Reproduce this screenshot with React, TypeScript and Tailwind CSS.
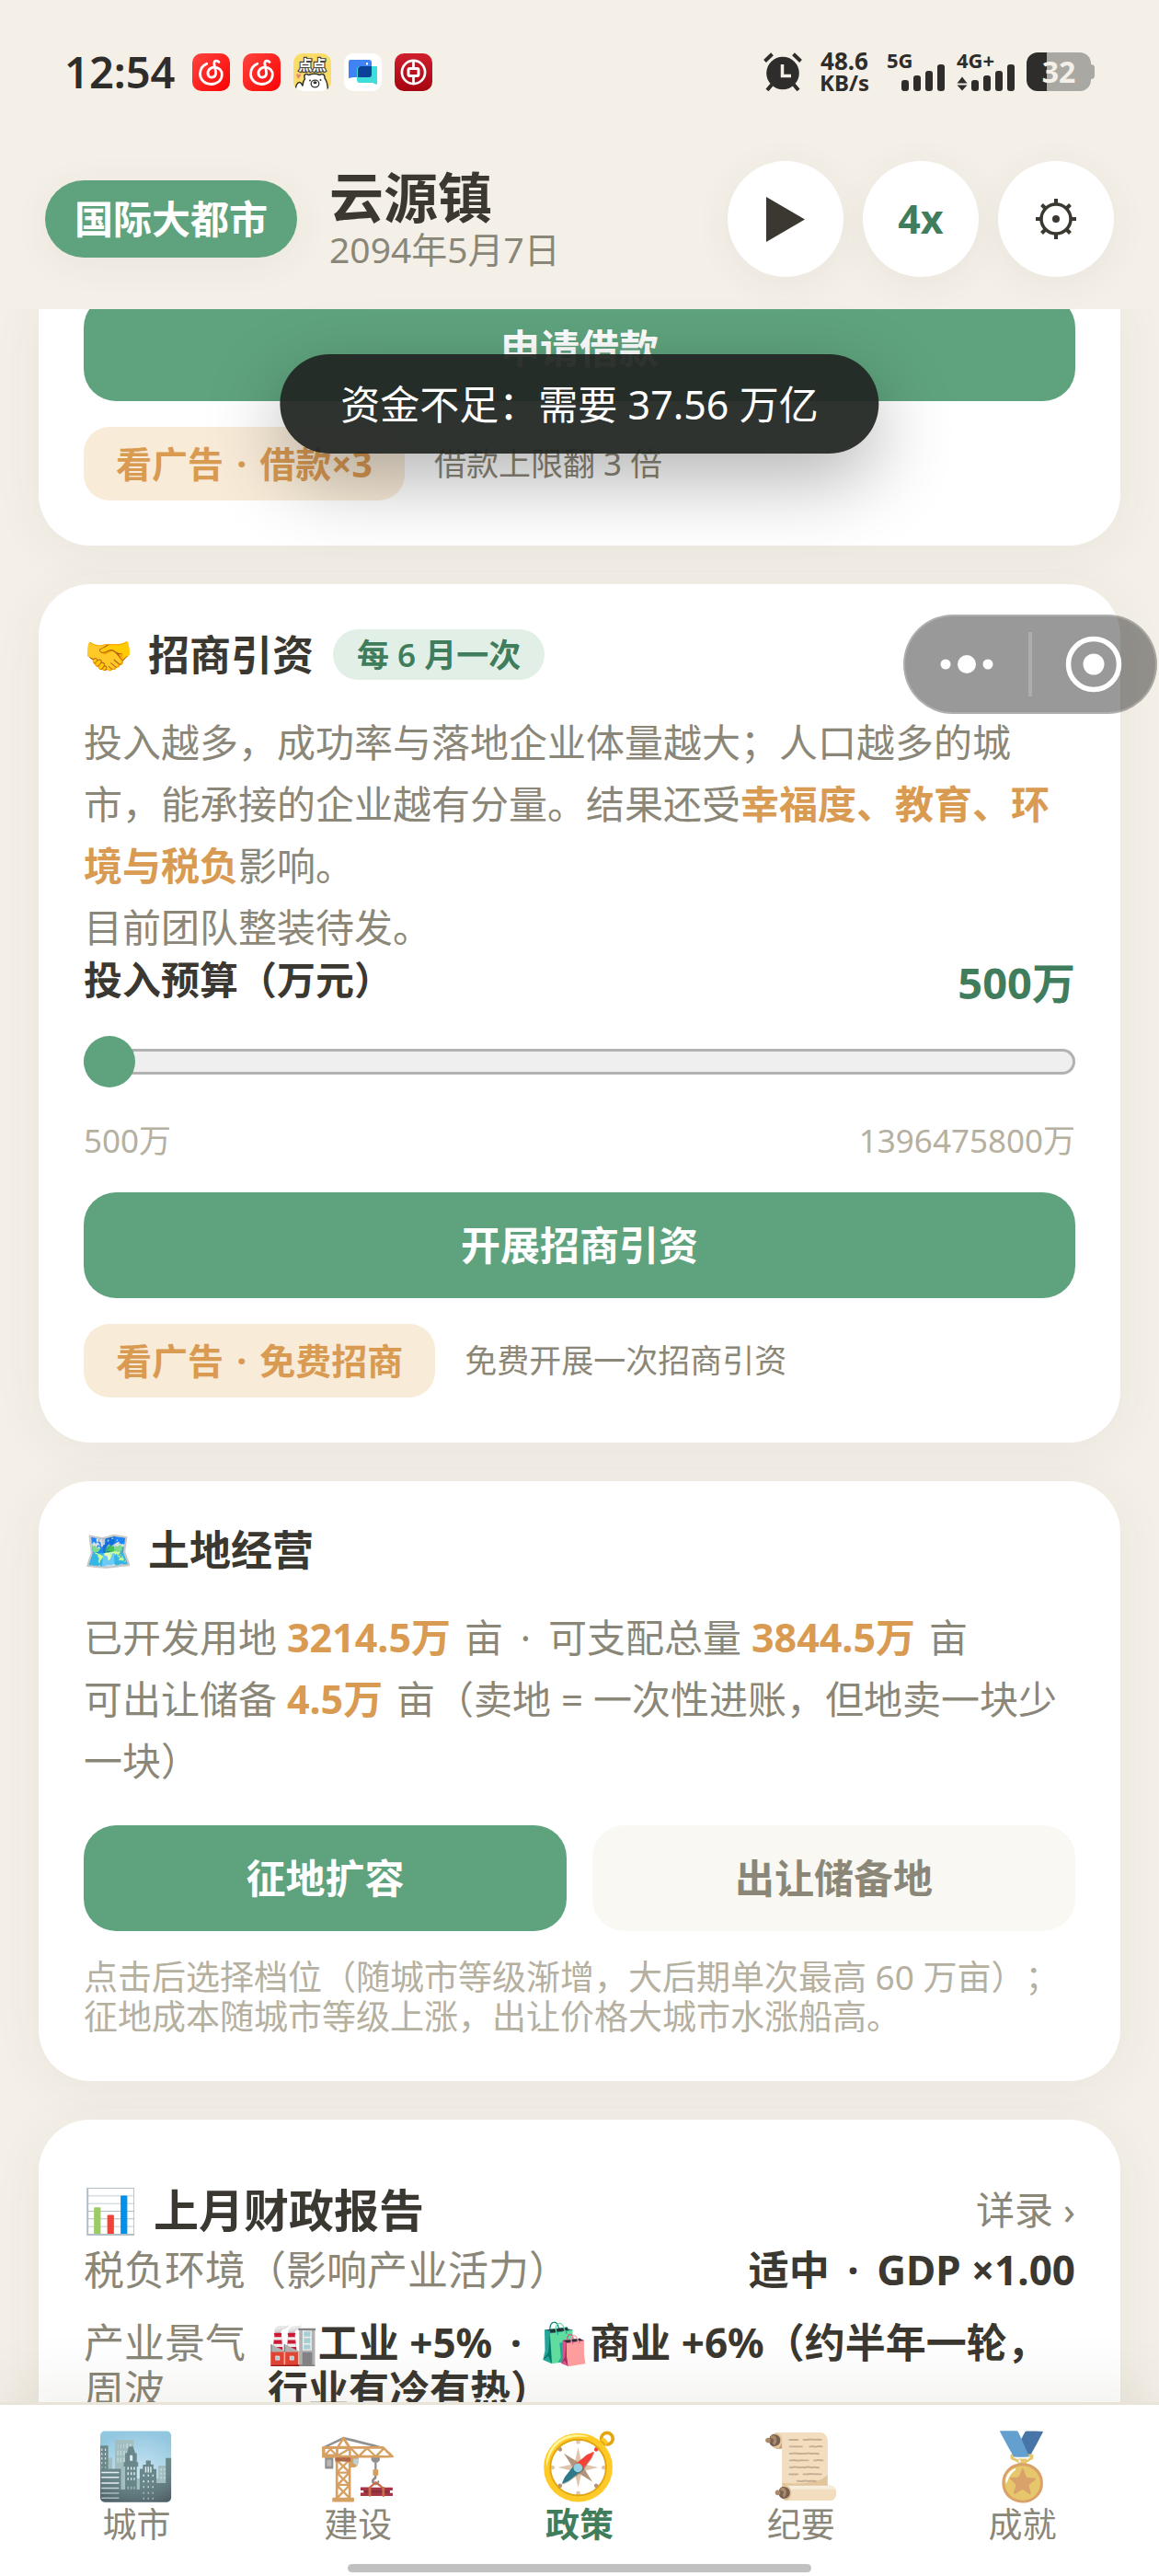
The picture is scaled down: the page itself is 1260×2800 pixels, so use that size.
import { useState } from 'react';
import type { ReactNode } from 'react';
import clsx from 'clsx';

const TABS = [
    { id: 'city', icon: '🏙️', label: '城市' },
    { id: 'build', icon: '🏗️', label: '建设' },
    { id: 'policy', icon: '🧭', label: '政策' },
    { id: 'notes', icon: '📜', label: '纪要' },
    { id: 'medals', icon: '🏅', label: '成就' },
];

function MusicIcon() {
    return (
        <svg viewBox="0 0 41 41" className="size-[41px]" aria-hidden="true">
            <defs>
                <linearGradient id="music" x1="0" y1="0" x2="1" y2="1">
                    <stop offset="0" stopColor="#ff4540" />
                    <stop offset="1" stopColor="#fb0202" />
                </linearGradient>
            </defs>
            <rect width="41" height="41" rx="10" fill="url(#music)" />
            <g fill="none" stroke="#fff" strokeWidth="2.8" strokeLinecap="round">
                <path d="M29 9.500C27.500 7.500 24 7.500 23.800 10.500C23.800 13 26 19 25.500 22.500C25 26 20 27.500 17.800 24.500C15.500 20.500 18 16 23 15.200C29.500 14.800 32.500 19 32.300 23.500C32 29.500 27 33.500 20.500 33.500C13 33.500 8.500 28 8.500 22.500C8.500 17 11.500 13 15.800 11.200" />
            </g>
        </svg>
    );
}

function BearIcon() {
    return (
        <svg viewBox="0 0 41 41" className="size-[41px]" aria-hidden="true">
            <defs>
                <clipPath id="bear"><rect width="41" height="41" rx="10" /></clipPath>
            </defs>
            <g clipPath="url(#bear)">
                <rect width="41" height="41" fill="#f9dd68" />
                <text x="20.500" y="18" textAnchor="middle" fontSize="15" fontWeight="700" fill="#fff" stroke="#444" strokeWidth="2.400" paintOrder="stroke" fontFamily="Noto Sans CJK SC, sans-serif">点点</text>
                <path d="M3 23c1-1.500 2.500-.5 2.500.5c.5-1.500 3-1 2.500.8L5 28z" fill="#ef7f7c" />
                <path d="M2 42c0-6 2-11 5-10.500c2 .5 2.500 3 3 4c0-4 1-6 2.500-8c-2-4 1-6.500 4-4c4-1.500 9-1.500 12 0c3-2 6-.5 5.500 3.500c2.500 3 3.500 10 3.500 15z" fill="#fff" stroke="#333" strokeWidth="1.500" />
                <ellipse cx="23.500" cy="33" rx="4.300" ry="3.800" fill="#fff" stroke="#333" strokeWidth="1.300" />
                <ellipse cx="23.500" cy="31.800" rx="2" ry="1.500" fill="#333" />
                <circle cx="18" cy="29.500" r="1" fill="#333" />
                <circle cx="29.500" cy="29" r="1" fill="#333" />
            </g>
        </svg>
    );
}

function ChatIcon() {
    return (
        <svg viewBox="0 0 41 41" className="size-[41px]" aria-hidden="true">
            <rect width="41" height="41" rx="10" fill="#fff" />
            <path d="M7 7h20a3 3 0 0 1 3 3v16H10l-5 1V9a2 2 0 0 1 2-2z" fill="#3f83f6" />
            <path d="M18 14h18v20l-5-2H17a3 3 0 0 1-3-3V18a4 4 0 0 1 4-4z" fill="#3fdcdc" />
            <path d="M18 14h12v9a3 3 0 0 1-3 3H15v-8a4 4 0 0 1 3-4z" fill="#0b4298" />
            <rect x="24" y="10" width="2" height="2.500" fill="#fff" />
        </svg>
    );
}

function BankIcon() {
    return (
        <svg viewBox="0 0 41 41" className="size-[41px]" aria-hidden="true">
            <defs>
                <linearGradient id="bank" x1="0" y1="0" x2="0" y2="1">
                    <stop offset="0" stopColor="#cf1e2e" />
                    <stop offset="1" stopColor="#a5060f" />
                </linearGradient>
            </defs>
            <rect width="41" height="41" rx="10" fill="url(#bank)" />
            <g fill="none" stroke="#fff">
                <circle cx="20.500" cy="20.500" r="12.600" strokeWidth="2.700" />
                <rect x="15" y="16.500" width="11" height="8" rx="1.500" strokeWidth="3" />
                <path d="M20.500 8v8M20.500 25v8" strokeWidth="2.700" />
            </g>
        </svg>
    );
}

function AlarmIcon() {
    return (
        <svg viewBox="0 0 42 42" className="size-[42px]" aria-hidden="true">
            <circle cx="21" cy="22.500" r="17.800" fill="#2f2d2b" />
            <g fill="none" stroke="#2f2d2b" strokeWidth="4" strokeLinecap="butt">
                <path d="M1.500 9.500L9.500 1.800M40.500 9.500L32.500 1.800M9 35l-5 6M33 35l5 6" />
            </g>
            <path d="M20.500 13v12.500h9.500" fill="none" stroke="#f4f0e8" strokeWidth="3.500" />
        </svg>
    );
}

function Signal({ label, arrows }: { label: string; arrows?: boolean }) {
    return (
        <span className="relative block h-[42px] w-16">
            <span className="absolute -top-1 left-0 text-[22px] leading-6 font-bold">{label}</span>
            <svg viewBox="0 0 64 42" className="block h-[42px] w-16" fill="#2f2d2b" aria-hidden="true">
                {arrows && <path d="M6 26.500l5.500 7H.5zM6 41.500l5.500-6H.5z" />}
                <rect x="16" y="30" width="8" height="12" rx="3" />
                <rect x="29" y="25" width="8" height="17" rx="3" />
                <rect x="42" y="20" width="8" height="22" rx="3" />
                <rect x="55" y="13" width="8" height="29" rx="3" />
            </svg>
        </span>
    );
}

function StatusBar() {
    return (
        <div className="flex h-[140px] items-center justify-between px-[70px] pt-4 text-[#2f2d2b]">
            <div className="flex items-center gap-[14px]">
                <span className="mr-1 text-[47px] leading-[48px] font-semibold">12:54</span>
                <MusicIcon />
                <MusicIcon />
                <BearIcon />
                <ChatIcon />
                <BankIcon />
            </div>
            <div className="flex items-center gap-3">
                <AlarmIcon />
                <div className="mx-1 w-[60px] text-center text-[26px] leading-6 font-bold">
                    <div>48.6</div>
                    <div className="text-[24px] leading-6">KB/s</div>
                </div>
                <Signal label="5G" />
                <Signal label="4G+" arrows />
                <div className="flex items-center">
                    <div className="flex h-[42px] w-[70px] items-center justify-center rounded-xl bg-linear-to-r from-[#2f2d2b] from-32% to-[#aaa8a2] to-32% text-[32px] leading-8 font-bold text-[#f4f0e8]">32</div>
                    <div className="h-4 w-1 rounded-r-full bg-[#aaa8a2]" />
                </div>
            </div>
        </div>
    );
}

function RoundButton({ label, children }: { label: string; children: ReactNode }) {
    return (
        <button
            type="button"
            aria-label={label}
            className="flex size-[126px] items-center justify-center rounded-full bg-white text-[43px] leading-[48px] font-bold text-[#3f7d5d] shadow-[0_7px_42px_rgba(60,50,30,0.06)]"
        >
            {children}
        </button>
    );
}

function Header() {
    return (
        <header className="flex items-center justify-between px-[49px] py-[35px]">
            <div className="flex items-center gap-[35px]">
                <span className="flex h-[84px] items-center rounded-full bg-[#5fa37e] px-8 text-[42px] leading-[48px] font-bold text-white shadow-[0_7px_42px_rgba(60,50,30,0.06)]">
                    国际大都市
                </span>
                <div>
                    <h1 className="text-[59px] leading-[66px] font-bold text-[#3b3832]">云源镇</h1>
                    <p className="text-[39px] leading-[48px] text-[#8b8778]">2094年5月7日</p>
                </div>
            </div>
            <div className="flex gap-[21px]">
                <RoundButton label="继续">
                    <svg viewBox="0 0 42 49" className="h-[49px] w-[42px]" aria-hidden="true">
                        <path d="M0 0L42 24.500L0 49z" fill="#3b3832" />
                    </svg>
                </RoundButton>
                <RoundButton label="速度">4x</RoundButton>
                <RoundButton label="设置">
                    <svg viewBox="-22 -22 44 44" className="size-[44px]" fill="none" stroke="#3b3832" aria-hidden="true">
                        <circle r="16" strokeWidth="3.500" />
                        <circle r="4" fill="#3b3832" stroke="none" />
                        <path d="M0-22v5M0 22v-5M-22 0h5M22 0h-5M-15.500-15.500l4 4M15.500 15.500l-4-4M-15.500 15.500l4-4M15.500-15.500l-4 4" strokeWidth="4" />
                    </svg>
                </RoundButton>
            </div>
        </header>
    );
}

function Card({ className, children }: { className?: string; children: ReactNode }) {
    return (
        <section className={clsx('bg-white px-[49px] pb-[49px] shadow-[0_7px_56px_rgba(60,50,30,0.06)]', className)}>
            {children}
        </section>
    );
}

function ActionButton({ muted, className, children }: { muted?: boolean; className?: string; children: ReactNode }) {
    return (
        <button
            type="button"
            className={clsx(
                'h-[115px] w-full rounded-[35px] text-[43px] leading-[48px] font-bold',
                muted ? 'bg-[#f9f8f2] text-[#8b8778]' : 'bg-[#5fa37e] text-white',
                className,
            )}
        >
            {children}
        </button>
    );
}

function Dot() {
    return <span className="mx-2">·</span>;
}

function AdRow({ action, note }: { action: string; note: string }) {
    return (
        <div className="mt-7 flex items-center gap-8">
            <button type="button" className="h-20 rounded-[28px] bg-[#f8ebd8] px-[35px] text-[39px] leading-[48px] font-bold text-[#d99a52]">
                看广告 <span className="mx-1">·</span> {action}
            </button>
            <span className="text-[35px] leading-[42px] text-[#8b8778]">{note}</span>
        </div>
    );
}

function CardTitle({ icon, children }: { icon: string; children: ReactNode }) {
    return (
        <h2 className="flex items-center gap-4 text-[45px] leading-[52px] font-bold text-[#3b3832]">
            <span className="w-[54px] text-[43px]">{icon}</span>
            {children}
        </h2>
    );
}

function Amount({ children }: { children: ReactNode }) {
    return <b className="mr-1 text-[43px] font-bold text-[#d99a52]">{children}</b>;
}

function InvestCard() {
    const [budget, setBudget] = useState(500);

    return (
        <Card className="rounded-[56px] pt-[49px]">
            <div className="flex h-[55px] items-center gap-[21px]">
                <CardTitle icon="🤝">招商引资</CardTitle>
                <span className="flex h-[55px] items-center rounded-full bg-[#e2efe6] px-[26px] text-[35px] leading-[42px] font-semibold text-[#3f7d5d]">
                    每 6 月一次
                </span>
            </div>
            <p className="mt-[34px] text-[42px] leading-[67px] text-[#8b8778]">
                投入越多，成功率与落地企业体量越大；人口越多的城市，能承接的企业越有分量。结果还受
                <b className="font-bold text-[#d99a52]">幸福度、教育、环境与税负</b>影响。
                <br />
                目前团队整装待发。
            </p>
            <div className="flex items-start justify-between">
                <label htmlFor="budget" className="text-[42px] leading-[48px] font-semibold text-[#3b3832]">投入预算（万元）</label>
                <output htmlFor="budget" className="text-[47px] leading-[54px] font-bold text-[#3f7d5d]">{budget}万</output>
            </div>
            <input
                id="budget"
                type="range"
                min={500}
                max={1396475800}
                value={budget}
                onChange={(e) => setBudget(Number(e.target.value))}
                className="mt-[31px] block h-14 w-full appearance-none bg-transparent [&::-webkit-slider-runnable-track]:h-7 [&::-webkit-slider-runnable-track]:rounded-full [&::-webkit-slider-runnable-track]:bg-[#efefef] [&::-webkit-slider-runnable-track]:shadow-[inset_0_0_0_3px_#b2b2b2] [&::-webkit-slider-thumb]:-mt-[14px] [&::-webkit-slider-thumb]:size-14 [&::-webkit-slider-thumb]:appearance-none [&::-webkit-slider-thumb]:rounded-full [&::-webkit-slider-thumb]:bg-[#5fa37e]"
            />
            <div className="mt-[37px] flex justify-between text-[35px] leading-[42px] text-[#b5b0a0]">
                <span>500万</span>
                <span>1396475800万</span>
            </div>
            <ActionButton className="mt-[35px]">开展招商引资</ActionButton>
            <AdRow action="免费招商" note="免费开展一次招商引资" />
        </Card>
    );
}

function LandCard() {
    return (
        <Card className="rounded-[56px] pt-[49px]">
            <CardTitle icon="🗺️">土地经营</CardTitle>
            <p className="mt-[35px] text-[42px] leading-[67px] text-[#8b8778]">
                已开发用地 <Amount>3214.5万</Amount> 亩 <Dot /> 可支配总量 <Amount>3844.5万</Amount> 亩
                <br />
                可出让储备 <Amount>4.5万</Amount> 亩（卖地 = 一次性进账，但地卖一块少一块）
            </p>
            <div className="mt-[37px] grid grid-cols-2 gap-7">
                <ActionButton>征地扩容</ActionButton>
                <ActionButton muted>出让储备地</ActionButton>
            </div>
            <p className="mt-7 text-[37px] leading-[43px] text-[#b5b0a0]">
                点击后选择档位（随城市等级渐增，大后期单次最高 60 万亩）；
                <br />
                征地成本随城市等级上涨，出让价格大城市水涨船高。
            </p>
        </Card>
    );
}

function ReportCard() {
    return (
        <Card className="rounded-t-[56px] pt-[49px]">
            <div className="flex items-center justify-between pt-[22px]">
                <h2 className="flex items-center gap-4 text-[49px] leading-[54px] font-bold text-[#3b3832]">
                    <span className="w-[60px] text-[47px]">📊</span>
                    上月财政报告
                </h2>
                <a href="#report" className="text-[42px] leading-[54px] text-[#8b8778]">详录 ›</a>
            </div>
            <dl className="text-[44px] leading-[51px]">
                <div className="flex justify-between pt-[13px] pb-[14px]">
                    <dt className="text-[#8b8778]">税负环境（影响产业活力）</dt>
                    <dd className="font-bold text-[#3b3832]">适中 <Dot /> GDP ×1.00</dd>
                </div>
                <div className="flex gap-6 py-[14px]">
                    <dt className="w-44 shrink-0 text-[#8b8778]">产业景气周波</dt>
                    <dd className="font-bold text-[#3b3832]">🏭工业 +5% <Dot /> 🛍️商业 +6%（约半年一轮，行业有冷有热）</dd>
                </div>
            </dl>
        </Card>
    );
}

function TabBar() {
    const [active, setActive] = useState('policy');

    return (
        <nav className="relative shrink-0 border-t-[3px] border-[#e8e4d8] bg-white px-7 shadow-[0_-14px_70px_rgba(60,50,30,0.08)]">
            <div className="grid grid-cols-5 pt-5">
                {TABS.map((tab) => (
                    <button
                        key={tab.id}
                        type="button"
                        onClick={() => setActive(tab.id)}
                        className={clsx(
                            'flex flex-col items-center text-[37px] leading-[44px]',
                            tab.id === active ? 'font-bold text-[#3f7d5d]' : 'text-[#8b8778]',
                        )}
                    >
                        <span className={clsx('text-[70px] leading-[88px] font-normal', tab.id !== active && 'opacity-90 grayscale-[0.4]')}>{tab.icon}</span>
                        {tab.label}
                    </button>
                ))}
            </div>
            <div className="mx-auto mt-[21px] mb-1 h-[9px] w-[504px] rounded-full bg-[#c1c1c1]" />
        </nav>
    );
}

function Toast({ children }: { children: ReactNode }) {
    return (
        <div role="status" className="absolute top-[49px] left-1/2 flex h-[108px] -translate-x-1/2 items-center rounded-full bg-[rgba(31,35,32,0.93)] px-[66px] text-[43px] leading-[51px] whitespace-nowrap text-white shadow-[0_28px_84px_rgba(0,0,0,0.3)]">
            {children}
        </div>
    );
}

function Capsule() {
    return (
        <div className="absolute top-[332px] right-0.5 flex h-[108px] w-[276px] items-center rounded-full border-2 border-white/20 bg-black/40 bg-clip-border">
            <button type="button" aria-label="更多" className="flex flex-1 justify-center">
                <svg viewBox="0 0 58 20" className="h-5 w-[58px]" fill="#fff" aria-hidden="true">
                    <circle cx="6" cy="10" r="5.500" />
                    <circle cx="29" cy="10" r="10" />
                    <circle cx="52" cy="10" r="5.500" />
                </svg>
            </button>
            <span className="h-[70px] w-1 bg-white/20" />
            <button type="button" aria-label="关闭" className="flex flex-1 justify-center">
                <svg viewBox="0 0 62 62" className="size-[62px]" aria-hidden="true">
                    <circle cx="31" cy="31" r="27.500" fill="none" stroke="#fff" strokeWidth="5.500" />
                    <circle cx="31" cy="31" r="11.500" fill="#fff" />
                </svg>
            </button>
        </div>
    );
}

export default function App() {
    return (
        <div className="flex h-screen flex-col overflow-hidden bg-[#f4f0e8] font-['Noto_Sans','Noto_Sans_CJK_SC','Noto_Color_Emoji',sans-serif] [text-spacing-trim:space-all]">
            <StatusBar />
            <Header />
            <div className="relative min-h-0 flex-1">
                <main className="flex h-full flex-col gap-[42px] overflow-hidden px-[42px] *:shrink-0">
                    <Card className="-mt-[15px] rounded-b-[56px]">
                        <ActionButton>申请借款</ActionButton>
                        <AdRow action="借款×3" note="借款上限翻 3 倍" />
                    </Card>
                    <InvestCard />
                    <LandCard />
                    <ReportCard />
                </main>
                <Toast>资金不足：需要 37.56 万亿</Toast>
                <Capsule />
            </div>
            <TabBar />
        </div>
    );
}
